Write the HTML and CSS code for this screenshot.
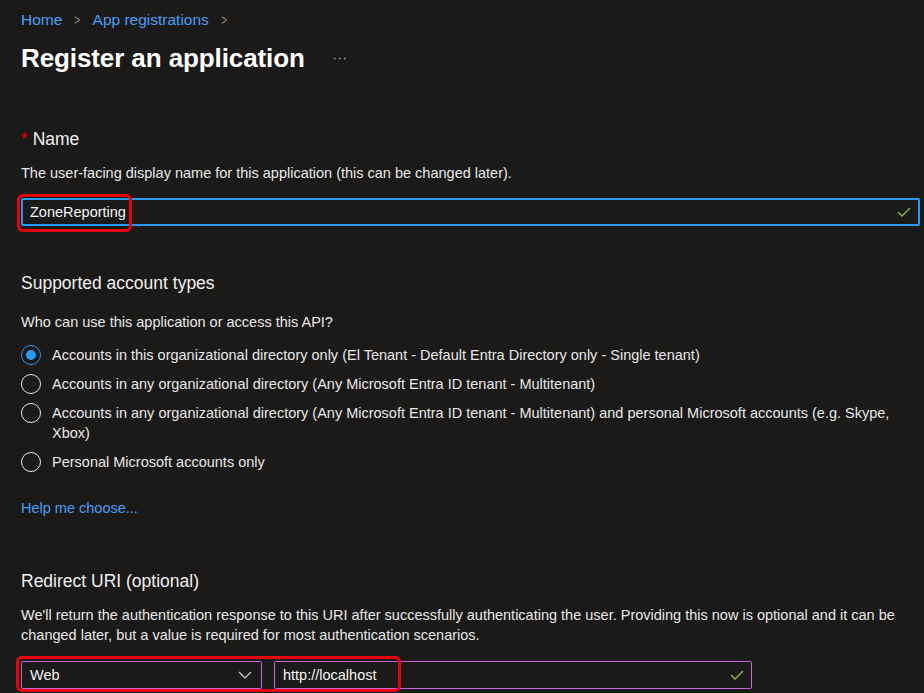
FILE: index.html
```html
<!DOCTYPE html>
<html lang="en">
<head>
    <meta charset="UTF-8">
    <title>Register an application</title>
    <link rel="stylesheet" href="styles.css">
</head>
<body>
    <nav class="breadcrumb">
        <a href="#">Home</a>
        <span class="chev">&gt;</span>
        <a href="#">App registrations</a>
        <span class="chev">&gt;</span>
    </nav>

    <div class="title-row">
        <h1>Register an application</h1>
        <span class="more">&middot;&middot;&middot;</span>
    </div>

    <section class="name-section">
        <h2><span class="req">*</span> Name</h2>
        <p>The user-facing display name for this application (this can be changed later).</p>
        <div class="field field-name">
            <span class="value">ZoneReporting</span>
            <svg class="check" width="14" height="10" viewBox="0 0 14 10"><path d="M1 5 L5 9 L13 1" fill="none" stroke="#8cbd3f" stroke-width="1.3"/></svg>
            <span class="mark mark-name"></span>
        </div>
    </section>

    <section class="accounts">
        <h2>Supported account types</h2>
        <p>Who can use this application or access this API?</p>
        <ul class="radios">
            <li><span class="radio on"></span><span>Accounts in this organizational directory only (El Tenant - Default Entra Directory only - Single tenant)</span></li>
            <li><span class="radio"></span><span>Accounts in any organizational directory (Any Microsoft Entra ID tenant - Multitenant)</span></li>
            <li><span class="radio"></span><span>Accounts in any organizational directory (Any Microsoft Entra ID tenant - Multitenant) and personal Microsoft accounts (e.g. Skype, Xbox)</span></li>
            <li><span class="radio"></span><span>Personal Microsoft accounts only</span></li>
        </ul>
        <a class="help" href="#">Help me choose...</a>
    </section>

    <section class="redirect">
        <h2>Redirect URI (optional)</h2>
        <p>We'll return the authentication response to this URI after successfully authenticating the user. Providing this now is optional and it can be changed later, but a value is required for most authentication scenarios.</p>
        <div class="uri-row">
            <div class="field field-select">
                <span class="value">Web</span>
                <svg class="chevron" width="14" height="8" viewBox="0 0 14 8"><path d="M1 1 L7 7 L13 1" fill="none" stroke="#d0d0d0" stroke-width="1.2"/></svg>
            </div>
            <div class="field field-uri">
                <span class="value">http://localhost</span>
                <svg class="check" width="14" height="10" viewBox="0 0 14 10"><path d="M1 5 L5 9 L13 1" fill="none" stroke="#8cbd3f" stroke-width="1.3"/></svg>
            </div>
            <span class="mark mark-uri"></span>
        </div>
    </section>
</body>
</html>
```

FILE: styles.css
```css
html, body {
    height: 100%;
}

body {
    margin: 0;
    padding: 11px 0 0 21px;
    background-color: #1b1a19;
    color: #e8e8e8;
    font-family: "Liberation Sans", Arial, sans-serif;
    font-size: 14.5px;
    overflow: hidden;
}

a {
    color: #479ef5;
    text-decoration: none;
}

.breadcrumb {
    display: flex;
    align-items: center;
    gap: 11px;
    font-size: 15.5px;
    height: 18px;
}

.chev {
    color: #8a8a8a;
    font-size: 14px;
    transform: scaleX(0.7);
}

.title-row {
    display: flex;
    align-items: center;
    margin-top: 14px;
    height: 30px;
}

h1 {
    margin: 0;
    font-size: 26px;
    font-weight: 700;
    color: #fff;
    letter-spacing: -0.1px;
}

.more {
    margin-left: 28px;
    color: #d0d0d0;
    font-size: 12px;
    letter-spacing: 1px;
}

h2 {
    margin: 0;
    font-size: 17.5px;
    font-weight: 400;
    color: #f0f0f0;
}

p {
    margin: 0;
    line-height: 20px;
}

.req {
    color: #e0000b;
}

.name-section {
    margin-top: 56px;
}

.name-section p {
    margin-top: 13px;
}

.field {
    position: relative;
    display: flex;
    align-items: center;
    box-sizing: border-box;
    background: #1b1a19;
}

.field .value {
    color: #f4f4f4;
    padding-left: 8px;
}

.field-name {
    margin-top: 15px;
    width: 899px;
    height: 28px;
    border: 2px solid #2899f5;
    border-radius: 2px;
}

.field-name .value {
    padding-left: 7px;
}

.check {
    position: absolute;
    right: 7px;
    top: 50%;
    margin-top: -5px;
}

.mark {
    position: absolute;
    border: 3px solid #e8000b;
    border-radius: 6px;
    pointer-events: none;
}

.mark-name {
    left: -6px;
    top: -6px;
    width: 109px;
    height: 32px;
}

.accounts {
    margin-top: 47px;
}

.accounts p {
    margin-top: 18px;
}

.radios {
    list-style: none;
    margin: 13px 0 0;
    padding: 0;
}

.radios li {
    display: flex;
    align-items: flex-start;
    gap: 11px;
    line-height: 20px;
    margin-bottom: 9px;
    padding-right: 20px;
}

.radio {
    flex: none;
    box-sizing: border-box;
    width: 20px;
    height: 20px;
    border: 1px solid #e8e8e8;
    border-radius: 50%;
    position: relative;
}

.radio.on {
    border-color: #2899f5;
}

.radio.on::after {
    content: "";
    position: absolute;
    left: 4px;
    top: 4px;
    width: 10px;
    height: 10px;
    border-radius: 50%;
    background: #2899f5;
}

.help {
    display: block;
    margin-top: 28px;
}

.redirect {
    margin-top: 55px;
}

.redirect p {
    margin-top: 13px;
}

.uri-row {
    position: relative;
    display: flex;
    gap: 12px;
    margin-top: 16px;
}

.field-select,
.field-uri {
    height: 28px;
    border: 1px solid #c963d9;
    border-radius: 2px;
}

.field-select {
    width: 241px;
}

.field-uri {
    width: 478px;
}

.chevron {
    position: absolute;
    right: 9px;
    top: 50%;
    margin-top: -4px;
}

.mark-uri {
    left: -5px;
    top: -5px;
    width: 379px;
    height: 30px;
}
```
